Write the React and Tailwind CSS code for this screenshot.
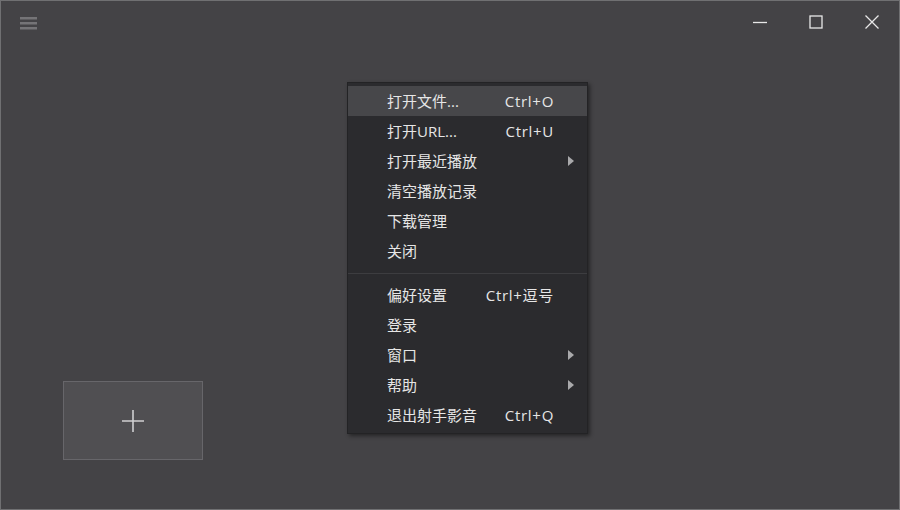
import React from 'react';

const items = [
  { label: '打开文件...', shortcut: 'Ctrl+O', active: true },
  { label: '打开URL...', shortcut: 'Ctrl+U' },
  { label: '打开最近播放', sub: true },
  { label: '清空播放记录' },
  { label: '下载管理' },
  { label: '关闭' },
  { sep: true },
  { label: '偏好设置', shortcut: 'Ctrl+逗号' },
  { label: '登录' },
  { label: '窗口', sub: true },
  { label: '帮助', sub: true },
  { label: '退出射手影音', shortcut: 'Ctrl+Q' },
];

const MenuRow = ({ item }) => {
  if (item.sep) {
    return (
      <div className="h-[14px] flex items-center">
        <div className="h-px w-full bg-[#3d3d40]" />
      </div>
    );
  }
  return (
    <div className={`h-[30px] flex items-center pl-[39px] pr-[33px] ${item.active ? 'bg-[#47474a]' : ''}`}>
      <span className="flex-1 text-[15px] text-[#e6e6e6]">{item.label}</span>
      {item.shortcut && <span className="text-[15px] tracking-[0.7px] text-[#e6e6e6]">{item.shortcut}</span>}
      {item.sub && (
        <svg width="8" height="10" viewBox="0 0 8 10" className="-mr-[21px]">
          <path d="M1 0 L7 5 L1 10 Z" fill="#a9a9ab" />
        </svg>
      )}
    </div>
  );
};

export default function App() {
  return (
    <div
      className="relative w-[900px] h-[510px] bg-[#444346] border border-[#707072] flex flex-col overflow-hidden"
      style={{ fontFamily: '"Open Sans", "Noto Sans CJK SC", sans-serif' }}
    >
      {/* title bar */}
      <div className="h-[44px] flex items-start justify-between">
        <div className="pt-[15px] pl-[19px]">
          <svg width="18" height="14" viewBox="0 0 18 14">
            <rect x="0" y="1" width="17" height="2.5" fill="#757477" />
            <rect x="0" y="6" width="17" height="2.5" fill="#757477" />
            <rect x="0" y="11" width="17" height="2.5" fill="#757477" />
          </svg>
        </div>
        <div className="flex items-center pt-[14px] pr-[20px] gap-[42px]">
          <svg width="14" height="14" viewBox="0 0 14 14">
            <path d="M0 7.5 H14" stroke="#e8e8e8" strokeWidth="1.3" />
          </svg>
          <svg width="14" height="14" viewBox="0 0 14 14">
            <rect x="1" y="1" width="12" height="12" fill="none" stroke="#e8e8e8" strokeWidth="1.3" />
          </svg>
          <svg width="14" height="14" viewBox="0 0 14 14">
            <path d="M0.5 0.5 L13.5 13.5 M13.5 0.5 L0.5 13.5" stroke="#e8e8e8" strokeWidth="1.3" />
          </svg>
        </div>
      </div>

      {/* main area with add card */}
      <div className="flex-1 flex flex-col justify-end pl-[62px] pb-[49px]">
        <div className="w-[140px] h-[79px] bg-[#504f52] border border-[#67666a] flex items-center justify-center">
          <svg width="24" height="24" viewBox="0 0 24 24">
            <path d="M12 1 V23 M1 12 H23" stroke="#cfcfd1" strokeWidth="1.6" />
          </svg>
        </div>
      </div>

      {/* context menu */}
      <div className="absolute left-[346px] top-[81px] w-[241px] bg-[#2b2b2e] border border-[#232325] py-[3px] shadow-[2px_2px_4px_rgba(0,0,0,0.45)]">
        {items.map((item, i) => (
          <MenuRow key={i} item={item} />
        ))}
      </div>
    </div>
  );
}
